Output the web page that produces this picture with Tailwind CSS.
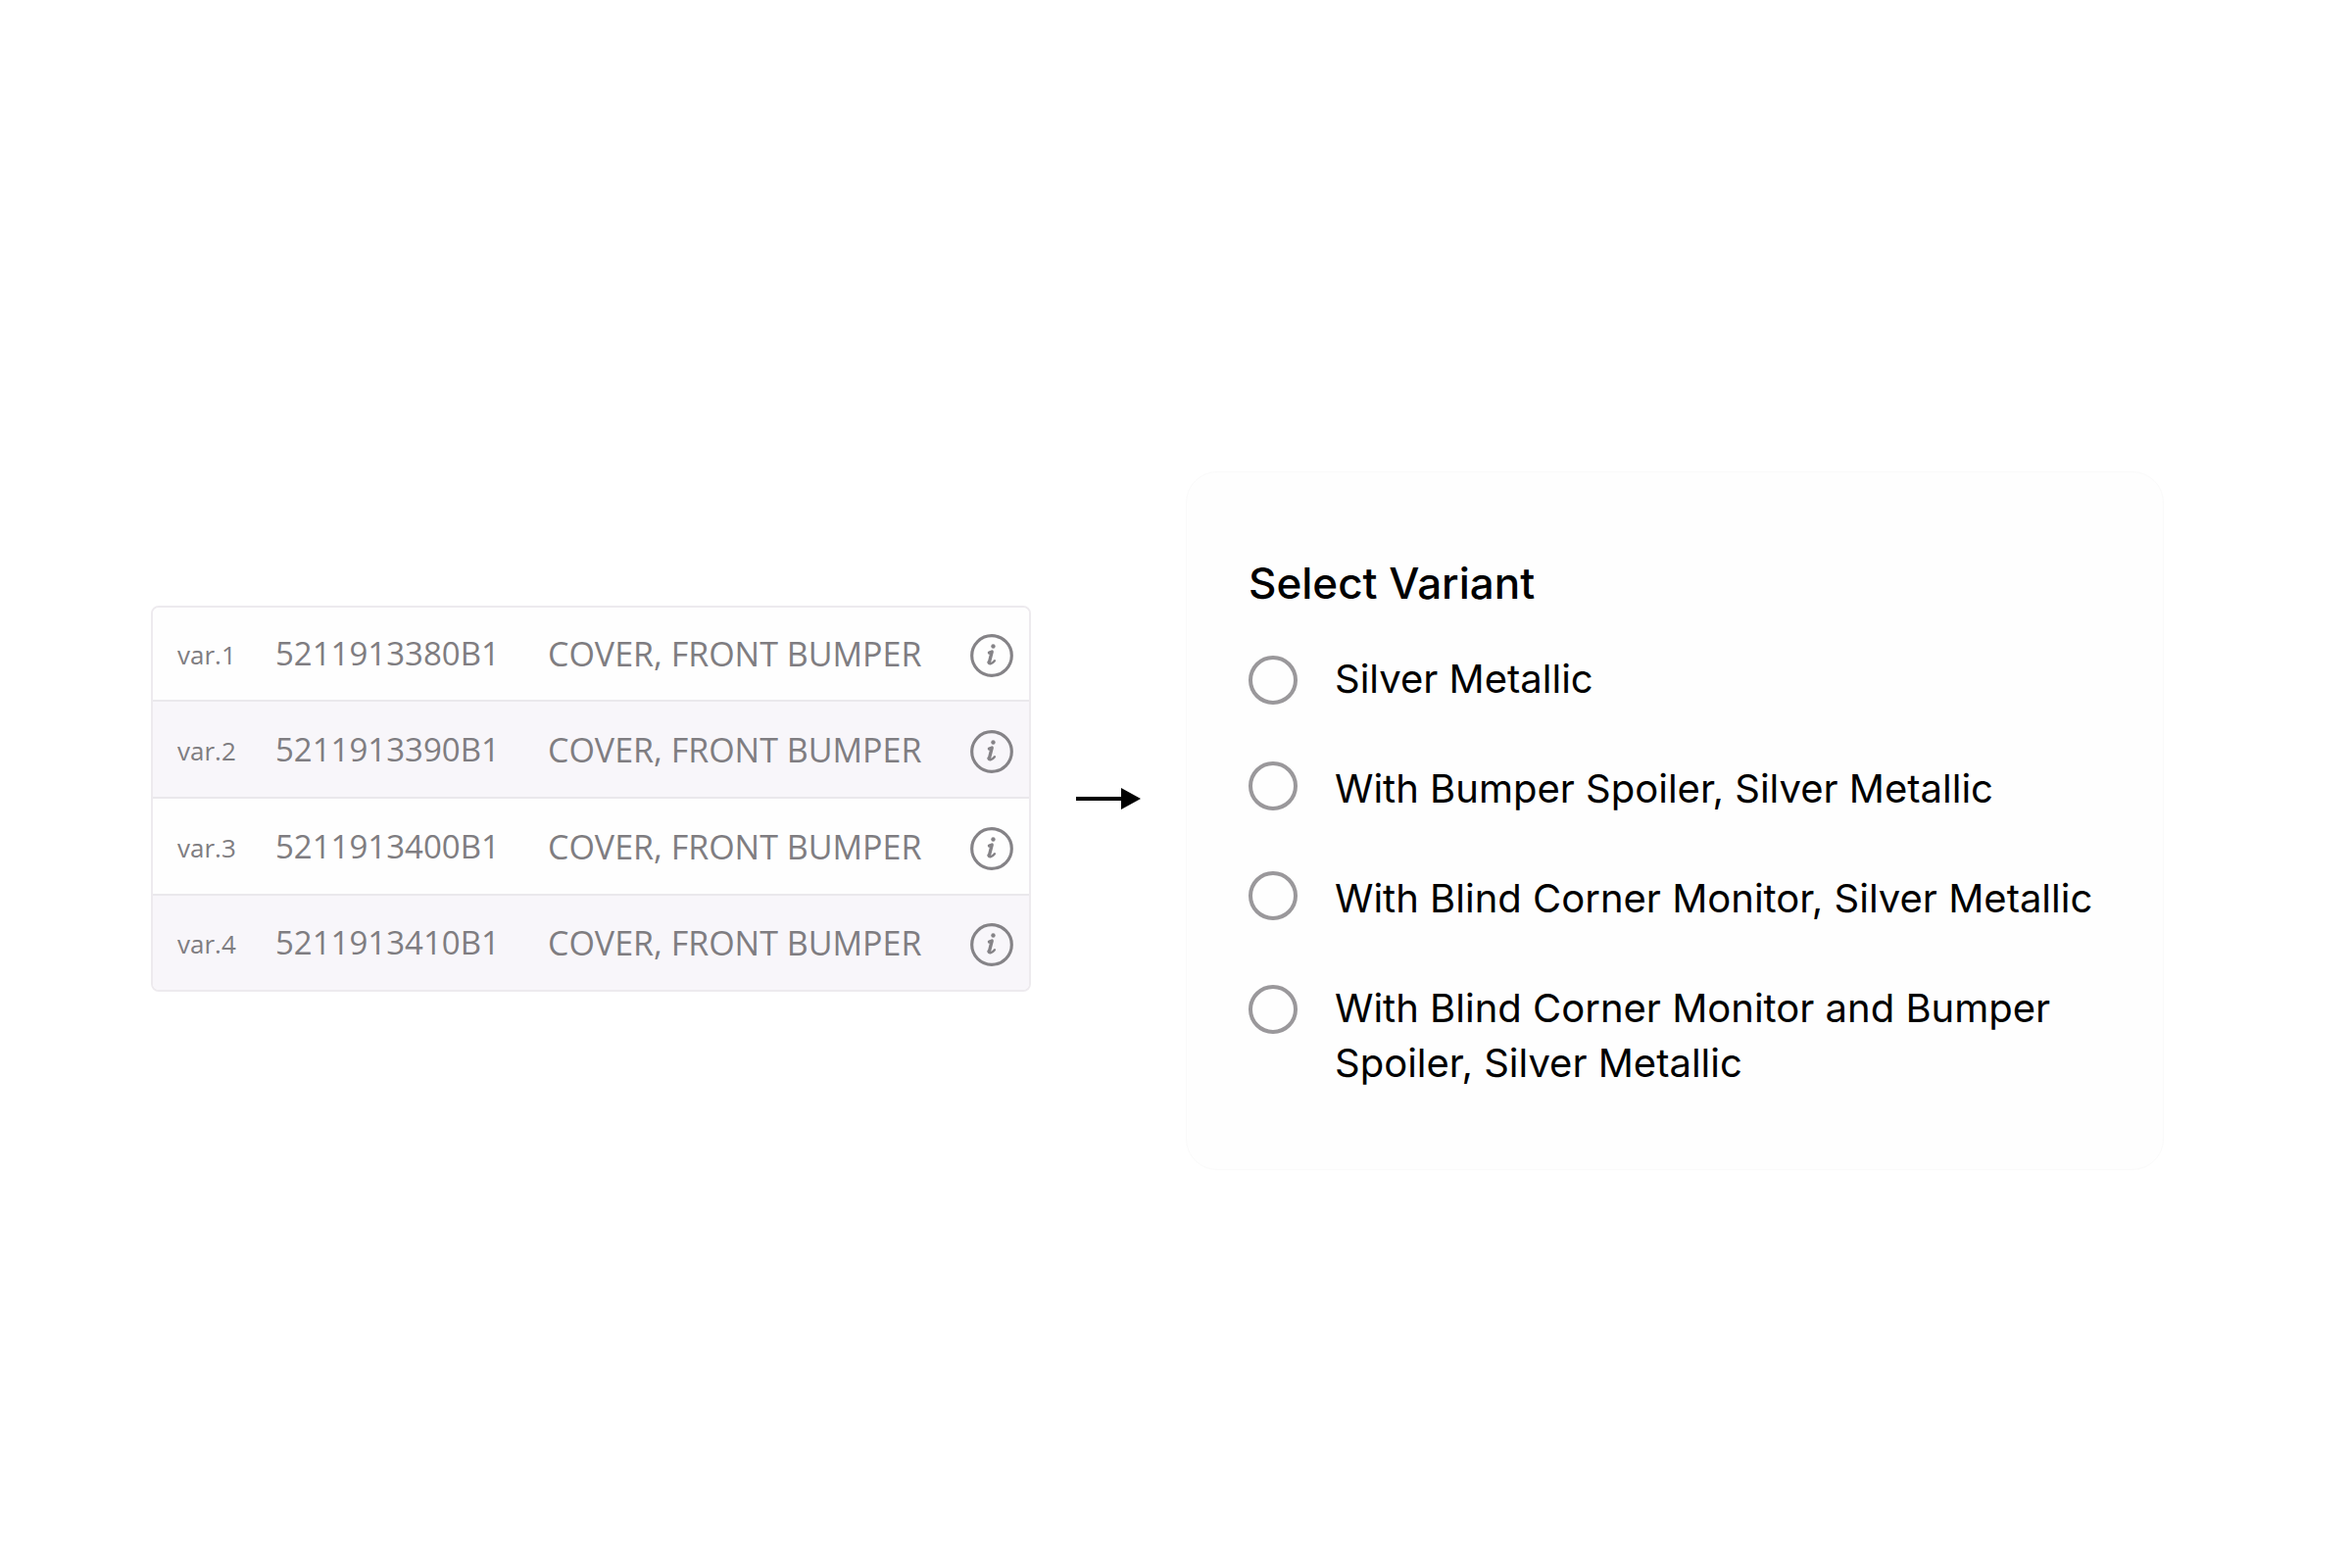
<!DOCTYPE html>
<html lang="en">
<head>
  <meta charset="UTF-8" />
  <meta name="viewport" content="width=device-width, initial-scale=1.0" />
  <title>Select Variant</title>
  <script src="https://cdn.jsdelivr.net/npm/@tailwindcss/browser@4"></script>
</head>
<body class="bg-white">
  <!-- info icon, reused in every part row -->
  <svg class="hidden" aria-hidden="true">
    <symbol id="info" viewBox="0 0 42 42">
      <circle cx="21" cy="21" r="19.4" fill="none" stroke="#858387" stroke-width="3" />
      <circle cx="22.4" cy="12" r="2.1" fill="#858387" />
      <path d="M18.6 18.2l2.6-1-2.6 10.2" fill="none" stroke="#858387" stroke-width="3.2" stroke-linecap="round" stroke-linejoin="round" />
      <path d="M17.6 27.4c.2 2.4 3.6 2 6.2-1.4" fill="none" stroke="#858387" stroke-width="2.2" stroke-linecap="round" />
    </symbol>
  </svg>

  <main class="grid min-h-screen grid-cols-[898fr_66px_998fr] items-center gap-[46px] pt-[30px] pr-48 pl-[154px]">
    <div class="min-w-0 overflow-hidden rounded-lg border-2 border-[#edeaee]">
      <table class="w-full table-fixed text-left font-['Open_Sans',sans-serif] text-[33px] leading-[48px] text-[#7f7d81]">
        <colgroup>
          <col class="w-[125px]" />
          <col class="w-[278px]" />
          <col />
          <col class="w-[90px]" />
        </colgroup>
        <tbody>
          <tr class="h-[95px] border-b-2 border-[#eae8ec] bg-[#fefefe]">
            <th scope="row" class="pl-[25px] font-normal"><span class="text-[26px]">var.1</span></th>
            <td>5211913380B1</td>
            <td class="text-[34px] whitespace-nowrap">COVER, FRONT BUMPER</td>
            <td class="pt-1 pr-4"><button type="button" aria-label="Info for var.1" class="ml-auto block size-11"><svg class="size-full"><use href="#info" /></svg></button></td>
          </tr>
          <tr class="h-[99px] border-b-2 border-[#eae8ec] bg-[#f8f6fa]">
            <th scope="row" class="pl-[25px] font-normal"><span class="text-[26px]">var.2</span></th>
            <td>5211913390B1</td>
            <td class="text-[34px] whitespace-nowrap">COVER, FRONT BUMPER</td>
            <td class="pt-1 pr-4"><button type="button" aria-label="Info for var.2" class="ml-auto block size-11"><svg class="size-full"><use href="#info" /></svg></button></td>
          </tr>
          <tr class="h-[99px] border-b-2 border-[#eae8ec] bg-[#fefefe]">
            <th scope="row" class="pl-[25px] font-normal"><span class="text-[26px]">var.3</span></th>
            <td>5211913400B1</td>
            <td class="text-[34px] whitespace-nowrap">COVER, FRONT BUMPER</td>
            <td class="pt-1 pr-4"><button type="button" aria-label="Info for var.3" class="ml-auto block size-11"><svg class="size-full"><use href="#info" /></svg></button></td>
          </tr>
          <tr class="h-[97px] bg-[#f8f6fa]">
            <th scope="row" class="pl-[25px] font-normal"><span class="text-[26px]">var.4</span></th>
            <td>5211913410B1</td>
            <td class="text-[34px] whitespace-nowrap">COVER, FRONT BUMPER</td>
            <td class="pt-1 pr-4"><button type="button" aria-label="Info for var.4" class="ml-auto block size-11"><svg class="size-full"><use href="#info" /></svg></button></td>
          </tr>
        </tbody>
      </table>
    </div>

    <svg class="h-6 w-full" viewBox="0 0 66 24" aria-hidden="true">
      <path d="M0 10h46V1l20 11-20 11v-9H0z" fill="#000" />
    </svg>

    <form class="mt-11 min-w-0 rounded-[32px] border border-[#fafafa] bg-[#fefefe] px-[63px] pt-[85px] pb-20 font-[Inter,sans-serif] text-black">
      <fieldset>
        <legend class="text-[44px] leading-[56px] font-medium">Select Variant</legend>
        <div class="mt-[42px] flex flex-col gap-14 text-[40px] leading-[56px]">
          <label class="flex items-start gap-[38px]">
            <input type="radio" name="variant" class="mt-1 size-[50px] shrink-0 appearance-none rounded-full border-4 border-[#9a989b] checked:bg-[#9a989b]" />
            <span>Silver Metallic</span>
          </label>
          <label class="flex items-start gap-[38px]">
            <input type="radio" name="variant" class="size-[50px] shrink-0 appearance-none rounded-full border-4 border-[#9a989b] checked:bg-[#9a989b]" />
            <span>With Bumper Spoiler, Silver Metallic</span>
          </label>
          <label class="flex items-start gap-[38px]">
            <input type="radio" name="variant" class="size-[50px] shrink-0 appearance-none rounded-full border-4 border-[#9a989b] checked:bg-[#9a989b]" />
            <span>With Blind Corner Monitor, Silver Metallic</span>
          </label>
          <label class="flex items-start gap-[38px]">
            <input type="radio" name="variant" class="mt-1 size-[50px] shrink-0 appearance-none rounded-full border-4 border-[#9a989b] checked:bg-[#9a989b]" />
            <span>With Blind Corner Monitor and Bumper Spoiler, Silver Metallic</span>
          </label>
        </div>
      </fieldset>
    </form>
  </main>
</body>
</html>
